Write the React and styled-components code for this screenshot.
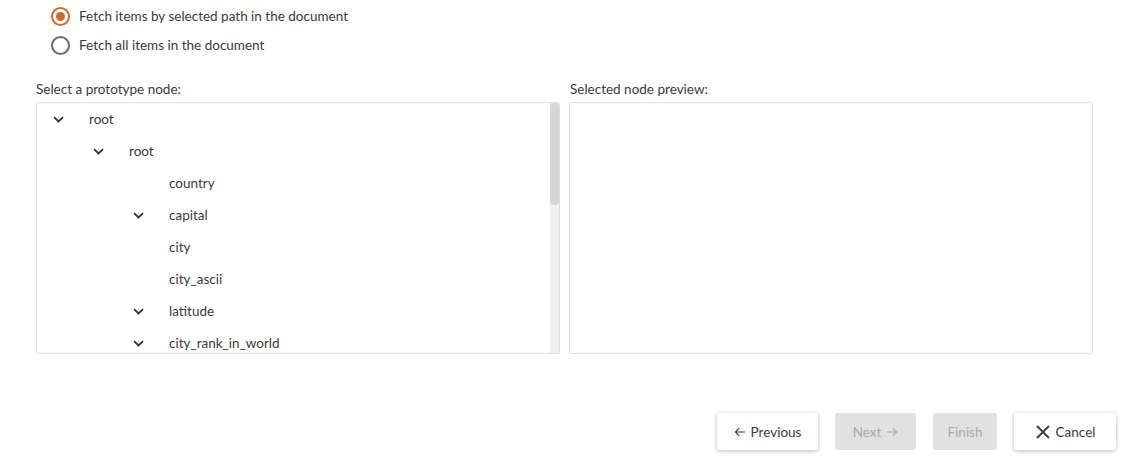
import React from 'react';
import styled, { createGlobalStyle } from 'styled-components';

const GlobalStyle = createGlobalStyle`
  body {
    margin: 0;
    background: #fff;
    font-family: Lato, "Open Sans", sans-serif;
    color: #3a3a3a;
  }
`;

const treeItems = [
  { id: 1, label: 'root', level: 0, open: true },
  { id: 2, label: 'root', level: 1, open: true },
  { id: 3, label: 'country', level: 2 },
  { id: 4, label: 'capital', level: 2, open: true },
  { id: 5, label: 'city', level: 2 },
  { id: 6, label: 'city_ascii', level: 2 },
  { id: 7, label: 'latitude', level: 2, open: true },
  { id: 8, label: 'city_rank_in_world', level: 2, open: true },
];

const Page = styled.div`
  padding: 6px 15px 16px 36px;
  font-size: 13.5px;
`;

const RadioGroup = styled.div`
  display: flex;
  flex-direction: column;
  gap: 9px;
  padding-left: 15px;
`;

const RadioRow = styled.label`
  display: flex;
  align-items: center;
  gap: 9px;
  height: 20px;
  line-height: 20px;
`;

const RadioCircle = styled.span`
  box-sizing: border-box;
  width: 19px;
  height: 19px;
  border-radius: 50%;
  border: 2px solid ${p => (p.checked ? '#cf6a2e' : '#6b6b6b')};
  display: flex;
  align-items: center;
  justify-content: center;

  &::after {
    content: '';
    width: 9px;
    height: 9px;
    border-radius: 50%;
    background: ${p => (p.checked ? '#cf6a2e' : 'transparent')};
  }
`;

const Panels = styled.div`
  display: grid;
  grid-template-columns: 524px 524px;
  gap: 9px;
  margin-top: 26px;
`;

const Column = styled.div`
  display: flex;
  flex-direction: column;
  gap: 5px;
`;

const FieldLabel = styled.div`
  line-height: 16px;
  padding-left: ${p => p.indent || 0}px;
`;

const Box = styled.div`
  box-sizing: border-box;
  height: 252px;
  border: 1px solid #dcdcdc;
  border-radius: 3px;
  display: flex;
  overflow: hidden;
`;

const TreeList = styled.div`
  flex: 1;
  overflow: hidden;
`;

const ScrollTrack = styled.div`
  width: 9px;
  flex: none;
  background: #f0f0f0;
  display: flex;
  flex-direction: column;
`;

const ScrollThumb = styled.div`
  height: 102px;
  background: #d6d6d6;
  border-radius: 4px;
`;

const TreeRow = styled.div`
  display: flex;
  align-items: center;
  height: 32px;
  white-space: nowrap;
  padding-left: ${p => 16 + p.level * 40}px;
`;

const Toggle = styled.span`
  width: 36px;
  flex: none;
  display: flex;
  align-items: center;
  color: #333;
`;

const ButtonBar = styled.div`
  display: flex;
  justify-content: flex-end;
  gap: 17px;
  margin-top: 59px;
`;

const Button = styled.button`
  box-sizing: border-box;
  height: 37px;
  min-width: ${p => p.width}px;
  padding: 0 14px;
  display: flex;
  align-items: center;
  justify-content: center;
  gap: 5px;
  font-family: inherit;
  font-size: 13.5px;
  border: none;
  border-radius: 3px;
  color: ${p => (p.disabled ? '#a9a9a9' : '#3a3a3a')};
  background: ${p => (p.disabled ? '#e1e1e1' : '#fff')};
  box-shadow: ${p => (p.disabled ? 'none' : '0 1px 4px rgba(0,0,0,0.28)')};
`;

const Chevron = () => (
  <svg width="11" height="7" viewBox="0 0 11 7">
    <path d="M1 1.2l4.5 4.3L10 1.2" fill="none" stroke="currentColor" strokeWidth="1.8" />
  </svg>
);

const ArrowLeft = () => (
  <svg width="12" height="10" viewBox="0 0 12 10">
    <path d="M11 5H1.5M5.2 1.2L1.4 5l3.8 3.8" fill="none" stroke="currentColor" strokeWidth="1.1" />
  </svg>
);

const ArrowRight = () => (
  <svg width="12" height="10" viewBox="0 0 12 10">
    <path d="M1 5h9.5M6.8 1.2L10.6 5 6.8 8.8" fill="none" stroke="currentColor" strokeWidth="1.1" />
  </svg>
);

const CloseIcon = () => (
  <svg width="16" height="16" viewBox="0 0 16 16">
    <path d="M2 2l12 12M14 2L2 14" fill="none" stroke="currentColor" strokeWidth="1.8" />
  </svg>
);

export default function App() {
  return (
    <Page>
      <GlobalStyle />
      <RadioGroup>
        <RadioRow>
          <RadioCircle checked />
          Fetch items by selected path in the document
        </RadioRow>
        <RadioRow>
          <RadioCircle />
          Fetch all items in the document
        </RadioRow>
      </RadioGroup>

      <Panels>
        <Column>
          <FieldLabel>Select a prototype node:</FieldLabel>
          <Box>
            <TreeList>
              {treeItems.map(item => (
                <TreeRow key={item.id} level={item.level}>
                  <Toggle>{item.open && <Chevron />}</Toggle>
                  {item.label}
                </TreeRow>
              ))}
            </TreeList>
            <ScrollTrack>
              <ScrollThumb />
            </ScrollTrack>
          </Box>
        </Column>
        <Column>
          <FieldLabel indent={1}>Selected node preview:</FieldLabel>
          <Box />
        </Column>
      </Panels>

      <ButtonBar>
        <Button width={101}>
          <ArrowLeft /> Previous
        </Button>
        <Button width={81} disabled>
          Next <ArrowRight />
        </Button>
        <Button width={64} disabled>
          Finish
        </Button>
        <Button width={102}>
          <CloseIcon /> Cancel
        </Button>
      </ButtonBar>
    </Page>
  );
}
